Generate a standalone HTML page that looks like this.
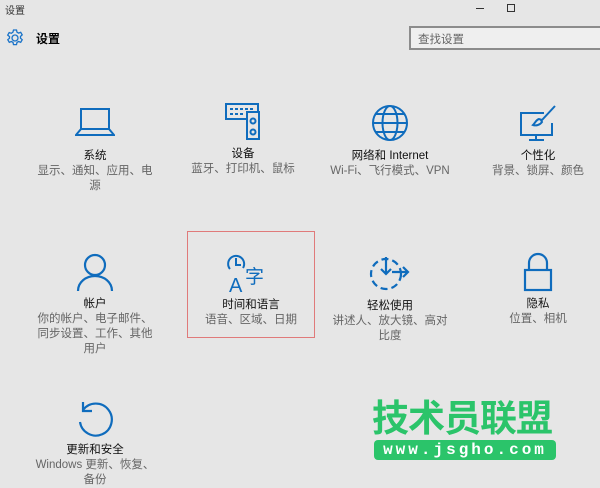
<!DOCTYPE html>
<html><head><meta charset="utf-8"><style>
*{margin:0;padding:0;box-sizing:border-box}
body{width:600px;height:464px;overflow:hidden;background:#e6e6e6;font-family:"Liberation Sans","Noto Sans CJK SC",sans-serif;position:relative;color:#000}
.a{position:absolute}
.item{position:absolute;width:140px;text-align:center}
.item svg{display:block;margin:0 auto}
.t{font-size:11.5px;color:#111;line-height:15px}
.s{font-size:11.5px;color:#666;line-height:15px;width:124px;margin:0 auto}
.wm{color:#2bc46a;font-weight:bold;font-size:37px;letter-spacing:-1px;font-family:"WenQuanYi Zen Hei","Noto Sans CJK SC",sans-serif}
</style></head><body>
<div class="a" style="left:5px;top:2px;font-size:10px;color:#333">设置</div>
<div class="a" style="left:476px;top:8px;width:8px;height:1px;background:#333"></div>
<div class="a" style="left:507px;top:4px;width:8px;height:8px;border:1px solid #333"></div>
<svg class="a" style="left:5px;top:28px" width="20" height="20" viewBox="0 0 20 20"><g fill="none" stroke="#1a73c8" stroke-width="1.3"><circle cx="10" cy="10" r="3"/><path d="M8.5 2h3l.5 2.2 1.6.9 2.1-.8 1.5 2.6-1.7 1.5v1.8l1.7 1.5-1.5 2.6-2.1-.8-1.6.9-.5 2.2h-3l-.5-2.2-1.6-.9-2.1.8-1.5-2.6 1.7-1.5V8.6L2.7 7.1l1.5-2.6 2.1.8L7.9 4.2z"/></g></svg>
<div class="a" style="left:36px;top:30px;font-size:12px;font-weight:bold">设置</div>
<div class="a" style="left:409px;top:26px;width:200px;height:24px;border:2px solid #8c8c8c;background:#efefef;font-size:11.5px;color:#666;padding:3px 0 0 7px">查找设置</div>

<div class="item" style="left:25px;top:105px"><svg width="40" height="34" viewBox="0 0 40 34"><g fill="none" stroke="#0f6cbd" stroke-width="2"><rect x="6" y="4" width="28" height="20"/><path d="M6 24 1 30h38l-5-6"/></g></svg><div class="t" style="margin-top:10px">系统</div><div class="s">显示、通知、应用、电源</div></div>
<div class="item" style="left:173px;top:101px"><svg width="40" height="40" viewBox="0 0 40 40"><g fill="none" stroke="#0f6cbd" stroke-width="2"><path d="M24 18H3V3h32v8"/><rect x="24" y="11" width="12" height="27"/><circle cx="30" cy="20" r="2.5"/><circle cx="30" cy="31" r="2.5"/></g><g fill="#0f6cbd"><rect x="7" y="7" width="3" height="2"/><rect x="12" y="7" width="3" height="2"/><rect x="17" y="7" width="3" height="2"/><rect x="22" y="7" width="3" height="2"/><rect x="27" y="7" width="3" height="2"/><rect x="7" y="12" width="3" height="2"/><rect x="12" y="12" width="3" height="2"/><rect x="17" y="12" width="3" height="2"/></g></svg><div class="t" style="margin-top:6px">设备</div><div class="s">蓝牙、打印机、鼠标</div></div>
<div class="item" style="left:320px;top:103px"><svg width="40" height="40" viewBox="0 0 40 40"><g fill="none" stroke="#0f6cbd" stroke-width="2"><circle cx="20" cy="20" r="17"/><ellipse cx="20" cy="20" rx="7.5" ry="17"/><path d="M3 20h34M6 11h28M6 29h28"/></g></svg><div class="t" style="margin-top:6px">网络和 Internet</div><div class="s" style="width:130px">Wi-Fi、飞行模式、VPN</div></div>
<div class="item" style="left:468px;top:104px"><svg width="40" height="38" viewBox="0 0 40 38"><g fill="none" stroke="#0f6cbd" stroke-width="2"><path d="M26 9H3v22h31V19"/><path d="M18 31v5M11 36h15"/><path d="M37 2 24 16l-3-1c-3 1-4 4-6 6 3 1 7 0 9-3l-1-2"/></g></svg><div class="t" style="margin-top:7px">个性化</div><div class="s">背景、锁屏、颜色</div></div>

<div class="item" style="left:25px;top:252px"><svg width="40" height="40" viewBox="0 0 40 40"><g fill="none" stroke="#0f6cbd" stroke-width="2.2"><circle cx="20" cy="13" r="10"/><path d="M3 39c0-9 8-15 17-15s17 6 17 15"/></g></svg><div class="t" style="margin-top:5px">帐户</div><div class="s">你的帐户、电子邮件、同步设置、工作、其他用户</div></div>
<div class="a" style="left:187px;top:231px;width:128px;height:107px;border:1px solid #e07a7a"></div>
<div class="item" style="left:181px;top:254px"><svg width="50" height="40" viewBox="0 0 50 40"><g fill="none" stroke="#0f6cbd" stroke-width="2"><path d="M4 15A8 8 0 1 1 17 14"/><path d="M10 4v7h5"/></g><text x="3" y="38" font-size="20" fill="#0f6cbd" font-family="Liberation Sans">A</text><text x="19" y="29" font-size="19" fill="#0f6cbd" font-family="Noto Sans CJK SC">字</text></svg><div class="t" style="margin-top:4px">时间和语言</div><div class="s">语音、区域、日期</div></div>
<div class="item" style="left:320px;top:254px"><svg width="44" height="38" viewBox="0 0 44 38"><g fill="none" stroke="#0f6cbd" stroke-width="2.2"><circle cx="18" cy="20" r="15" stroke-dasharray="7 4"/><path d="M18 3v17M13 15l5 5 5-5M24 18h16M35 13l5 5-5 5"/></g></svg><div class="t" style="margin-top:7px">轻松使用</div><div class="s">讲述人、放大镜、高对比度</div></div>
<div class="item" style="left:468px;top:252px"><svg width="40" height="40" viewBox="0 0 40 40"><g fill="none" stroke="#0f6cbd" stroke-width="2.2"><rect x="7" y="18" width="26" height="20"/><path d="M11 18v-7a9 9 0 0 1 18 0v7"/></g></svg><div class="t" style="margin-top:5px">隐私</div><div class="s">位置、相机</div></div>

<div class="item" style="left:25px;top:400px"><svg width="40" height="38" viewBox="0 0 40 38"><g fill="none" stroke="#0f6cbd" stroke-width="2.2"><path d="M8 10A16 16 0 1 1 5 22"/><path d="M8 2v9h9"/></g></svg><div class="t" style="margin-top:5px">更新和安全</div><div class="s">Windows 更新、恢复、备份</div></div>

<div class="a wm" style="left:372px;top:388px">技术员联盟</div>
<div class="a" style="left:374px;top:440px;width:182px;height:20px;background:#2bc46a;border-radius:4px;color:#fff;font-weight:bold;font-size:16px;letter-spacing:3px;text-align:center;line-height:20px;font-family:'Liberation Mono',monospace">www.jsgho.com</div>
</body></html>
